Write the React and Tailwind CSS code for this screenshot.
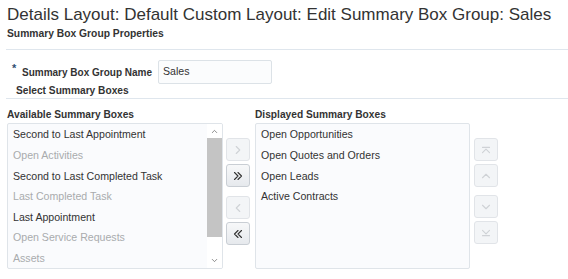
import React from "react";

const available = [
  { label: "Second to Last Appointment", on: true },
  { label: "Open Activities", on: false },
  { label: "Second to Last Completed Task", on: true },
  { label: "Last Completed Task", on: false },
  { label: "Last Appointment", on: true },
  { label: "Open Service Requests", on: false },
  { label: "Assets", on: false },
];

const displayed = ["Open Opportunities", "Open Quotes and Orders", "Open Leads", "Active Contracts"];

// small chevron glyphs for the shuttle buttons
const Chevron = ({ kind, color, size = 14 }) => {
  const p = {
    right: "M6 4l4 4-4 4",
    left: "M10 4l-4 4 4 4",
    rightAll: "M4 4l4 4-4 4M8 4l4 4-4 4",
    leftAll: "M8 4l-4 4 4 4M12 4l-4 4 4 4",
    up: "M4 10l4-4 4 4",
    down: "M4 6l4 4 4-4",
    top: "M4 11l4-4 4 4M4 5h8",
    bottom: "M4 5l4 4 4-4M4 11h8",
  }[kind];
  return (
    <svg width={size} height={size} viewBox="0 0 16 16" fill="none" stroke={color} strokeWidth="1.3" strokeLinecap="round" strokeLinejoin="round">
      <path d={p} />
    </svg>
  );
};

const ShuttleButton = ({ kind, enabled, className = "" }) => (
  <div
    className={
      "w-[24px] h-[23px] rounded-[3px] border flex items-center justify-center " +
      (enabled
        ? "border-[#c9ced4] bg-gradient-to-b from-[#f7f8f9] to-[#e6e9ed] "
        : "border-[#e1e4e8] bg-[#f3f5f7] ") +
      className
    }
  >
    <Chevron kind={kind} color={enabled ? "#333333" : "#cfd2d6"} />
  </div>
);

export default function App() {
  return (
    <div className="w-[568px] h-[279px] overflow-hidden bg-white text-[#333] font-['Liberation_Sans',Arial,sans-serif]">
      <div className="h-[27px] pl-[7px] pt-[5px] text-[17px] leading-[20px] whitespace-nowrap">
        Details Layout: Default Custom Layout: Edit Summary Box Group: Sales
      </div>

      <div className="h-[23px] ml-[6px] border-b border-[#dfe6ed] text-[10.3px] leading-[12px] font-bold pl-[1px] pt-[1px]">
        Summary Box Group Properties
      </div>

      {/* name field */}
      <div className="mt-[10px] h-[24px] flex items-center">
        <span className="ml-[12px] w-[10px] self-start pt-[3px] text-[11px] leading-[11px] text-[#2f4f72] font-bold">*</span>
        <span className="w-[136px] text-[10px] font-bold whitespace-nowrap">Summary Box Group Name</span>
        <div className="w-[114px] h-[24px] border border-[#dce2e7] bg-[#fbfcfd] rounded-[2px] flex items-center pl-[4px] text-[10.6px]">
          Sales
        </div>
      </div>

      <div className="h-[15px] ml-[6px] border-b border-[#dfe6ed] flex items-center pl-[10px] text-[10.2px] leading-[12px] font-bold">
        Select Summary Boxes
      </div>

      <div className="h-[24px] flex items-end pb-[2px] text-[10.2px] leading-[12px] font-bold">
        <span className="ml-[7px] w-[248px]">Available Summary Boxes</span>
        <span>Displayed Summary Boxes</span>
      </div>

      <div className="flex h-[146px]">
        {/* available list */}
        <div className="ml-[7px] w-[216px] h-[146px] border border-[#dfe4e9] rounded-[2px] bg-[#fafbfd] flex overflow-hidden">
          <div className="flex-1 pt-[1px] pl-[5px]">
            {available.map((a) => (
              <div
                key={a.label}
                className={"h-[20.6px] flex items-center text-[10.6px] whitespace-nowrap " + (a.on ? "text-[#333]" : "text-[#a9abad]")}
              >
                {a.label}
              </div>
            ))}
          </div>
          <div className="w-[15px] bg-white flex flex-col items-center">
            <div className="h-[14px] flex items-center justify-center">
              <Chevron kind="up" color="#666" size={9} />
            </div>
            <div className="w-[15px] h-[99px] bg-[#c4c4c4]" />
            <div className="flex-1" />
            <div className="h-[14px] mb-[1px] flex items-center justify-center">
              <Chevron kind="down" color="#666" size={9} />
            </div>
          </div>
        </div>

        {/* move buttons */}
        <div className="ml-[3px] w-[24px] pt-[15px] flex flex-col">
          <ShuttleButton kind="right" enabled={false} />
          <ShuttleButton kind="rightAll" enabled className="mt-[3px]" />
          <ShuttleButton kind="left" enabled={false} className="mt-[9px]" />
          <ShuttleButton kind="leftAll" enabled className="mt-[3px]" />
        </div>

        {/* displayed list */}
        <div className="ml-[5px] w-[215px] h-[146px] border border-[#dfe4e9] rounded-[2px] bg-[#fafbfd] pt-[1px] pl-[5px]">
          {displayed.map((d) => (
            <div key={d} className="h-[20.7px] flex items-center text-[10.6px] whitespace-nowrap">
              {d}
            </div>
          ))}
        </div>

        {/* reorder buttons */}
        <div className="ml-[4px] w-[25px] pt-[15px] flex flex-col">
          <ShuttleButton kind="top" enabled={false} />
          <ShuttleButton kind="up" enabled={false} className="mt-[3px]" />
          <ShuttleButton kind="down" enabled={false} className="mt-[8px]" />
          <ShuttleButton kind="bottom" enabled={false} className="mt-[3px]" />
        </div>
      </div>
    </div>
  );
}
